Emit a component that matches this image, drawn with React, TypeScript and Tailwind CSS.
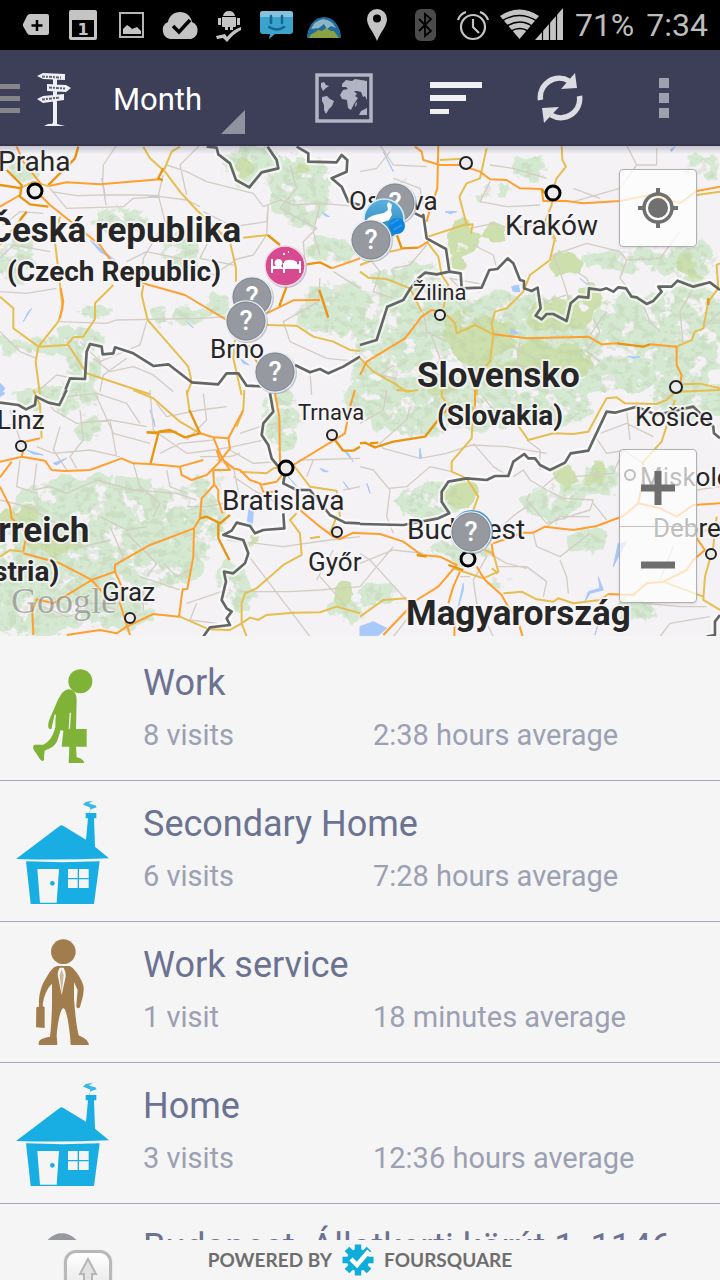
import type { ReactNode } from 'react';

type Tile = {
  x: number;
  y: number;
  minor: string;
  yellow: string;
  orange: string;
  dark: string;
  border: string;
  water: string;
};

// Each tile is drawn on a 1080x750 grid and scaled down by three
const TILES: Tile[] = [
  {
    x: 0,
    y: 145,
    minor:
      'M350 0L310 60L308 115L318 180M150 130L200 190L370 185L400 160L480 155L560 165L600 185M155 140L230 152L310 150L400 150L480 152M490 90L475 150L495 230L430 340L425 420M500 60L560 80L620 110L760 145L790 185L840 165L880 180L960 175L1080 185M560 150L540 60L600 0M610 200L700 245L800 230L805 180M805 185L800 270M870 60L890 130L840 190L950 250L910 290L915 350M640 260L600 340L700 360M380 350L440 320L560 345L640 390L700 350M180 530L320 535L350 525L600 520L680 515M0 440L80 445L170 430M0 340L40 300L150 320M10 240L60 200L130 205M0 560L60 620L110 640M240 590L300 650L420 600L440 530M280 640L330 680L400 665L460 690L520 740M300 740L310 690L380 640M800 270L760 330L700 345M960 180L940 260L960 330M960 400L955 470L850 530L870 590L980 640L1080 650M1000 380L1080 430M930 680L935 750M100 750L170 690L220 700',
    yellow:
      'M430 5L450 40L495 80L540 140L590 195L690 290L708 370L708 410M540 5L515 20L490 80M80 200L0 300M180 215L165 290L180 420L188 490L175 530L115 605L107 650L120 750M0 455L40 490L40 550L115 605L200 600L220 577L250 575L285 522L285 475L340 420M205 600L260 685L350 715L450 748M430 420L425 450L443 525L500 590L565 665L575 710L560 750M730 278L803 270M800 540L890 542L940 575L1000 590L1050 615L1080 618M705 585L700 640L725 750M60 130L100 110L150 125',
    orange:
      'M0 185L60 150M50 5L70 50L125 120M120 150L150 180L300 300L350 372L440 418L555 450L680 525M150 122L200 112L300 118L480 103M800 505L880 466L960 465M745 600L775 660M182 430L190 470L180 520M995 370L1080 340',
    dark: 'M20 75L65 120L60 155L90 178L145 185M0 120L65 130M145 120L225 40L235 5M490 70L475 100L488 106M860 425L838 483M920 358L960 352L995 370M958 435L985 518M803 270L840 300M60 225L80 200',
    border:
      'M620 5L650 8L655 28L690 55L708 105L748 127L785 82L835 70L830 45L803 5M890 5L925 25L925 50L1010 52L1025 30L1042 45L1040 80L995 100L1025 125L1045 170L1080 180M190 750L210 700L255 702L260 620L270 597L305 605L308 628L340 625L345 607L400 625L460 663L505 658L575 712L655 718L680 685L715 685L740 722L800 725M885 660L930 682L960 672L985 685L1030 665L1080 635',
    water:
      'M305 100L316 155L310 120ZM270 285L350 350L300 320ZM560 530L580 548L570 540ZM965 200L988 215L975 212ZM95 490L70 530L85 500ZM0 715L15 730L0 748ZM440 150L475 158L450 156ZM720 640L748 660L730 655Z',
  },
  {
    x: 360,
    y: 145,
    minor:
      'M60 0L100 60L200 65M0 80L50 70L90 20M100 100L180 130L190 180M390 60L460 70L560 100M390 110L360 170L440 185L540 180M640 130L720 160M560 260L590 290M330 250L400 235L450 250L560 235L600 240M340 300L400 330L410 370M580 330L600 380L630 470M580 330L680 295L780 320L800 345L900 340L960 260M800 345L780 400L800 425M650 380L680 400L700 440M700 520L720 560L680 620L720 650M740 500L690 570M900 560L870 530L850 480M800 0L830 60L780 130L640 170M890 10L890 60L830 60M20 330L60 380L40 440L100 460M200 300L150 360L100 370M210 560L240 640L210 700M190 500L200 560L260 590M480 420L560 470L620 450M480 590L470 660L560 680L560 640M1000 430L960 500L970 600M1080 500L1020 560M300 430L270 400L380 420M100 660L60 690L110 700',
    yellow:
      'M240 45L330 40M380 10L360 100L320 115L298 155L320 240L338 238L333 265M320 237L205 275M605 0L607 45L618 65L590 100L580 130L575 180L555 230L585 280L570 345L510 390L490 440L440 490L405 500L395 535L400 570L390 650L350 690L350 750M200 290L235 335L245 390L265 420L250 490M0 380L25 398L80 402L150 430L185 500M0 360L40 345M90 320L125 312M260 510L285 535L290 565L345 540L400 568M950 605L995 585L1005 560L1030 550L1045 470L1075 430L1070 360L1080 355M970 718L1020 716L1080 730M0 640L40 680L110 720L140 740L175 735M1010 150L1080 140',
    orange:
      'M235 0L232 130L205 210L200 230M330 70L360 80L390 103L440 105L480 130L545 132L550 168L620 168L670 175L780 168L870 150L960 175L1010 138L1080 125M175 308L205 290M0 690L20 650L135 580L185 515L215 495L240 500M400 568L500 580L685 575L725 598L770 595M870 598L950 605L950 660L965 690L960 720M165 5L185 20L190 45L240 60L300 60',
    dark: 'M100 240L125 310L175 308M770 595L850 605L870 598M1045 460L1045 480M545 132L560 150L600 150',
    border:
      'M165 205L185 215L190 210L200 280L258 312L268 380M0 600L50 585L82 485L130 465L150 432L175 400L195 383L230 388L268 380L302 385L305 430L365 428L388 375L412 372L443 340L460 355L480 405L492 408L492 430L515 438L533 428L542 490L527 512L545 523L560 507L580 507L620 528L632 475L655 455L685 458L687 430L722 435L740 430L760 440L775 427L798 430L815 455L830 457L860 477L880 468L905 440L895 425L935 425L953 407L1000 425L1050 412L1080 435',
    water:
      'M455 425L475 420L480 440L460 440ZM450 550L475 565L455 565ZM255 200L290 200L270 206ZM70 20L100 80L95 70ZM660 400L690 425L670 410ZM930 15L945 5L935 20ZM805 635L840 636L820 640Z',
  },
  {
    x: 0,
    y: 390,
    minor:
      'M120 0L160 60L230 100L330 90L440 110M200 20L290 10L380 40L420 100M30 60L60 150M180 110L160 180L200 240M240 60L250 150L210 200L230 235M330 90L350 200M290 20L340 130L450 160M110 170L160 190L270 180L360 200M110 220L100 300L150 290L200 310L290 270L400 300L530 310L590 330M400 220L420 290L480 340L460 380M60 210L50 290L110 310M500 240L510 290L560 310M470 40L500 80L600 60L680 50M450 0L460 120L560 190L640 180L700 170L790 150M610 10L620 90L560 150M480 190L540 160L640 150M720 130L780 110L830 100M690 180L760 220L840 215M650 210L700 230L720 330M600 200L690 200L720 190M560 350L620 350L670 340M700 260L760 300L850 350M680 450L850 470L990 450L1080 440M740 490L900 700L930 740M720 605L870 605L960 600L1080 590M960 560L1040 650M560 640L680 600M380 430L470 520L440 560M330 410L370 500L350 530M300 380L380 420L440 410M200 590L260 640L340 640M420 560L540 600M130 650L200 680L320 650L350 660M430 600L430 660M590 640L570 690L650 700M860 240L900 210L1080 205M940 210L920 260M1000 480L950 570M0 110L60 100M0 330L80 350L170 400M160 440L250 470L330 450M490 520L530 560L570 540M1030 300L1080 290',
    yellow:
      'M400 0L460 25L540 95L600 130M560 0L568 60M733 0L730 60L710 110M100 0L120 45L125 145M720 245L800 250L820 235L850 232M880 225L930 290L1010 302L1020 380M1010 380L990 430M890 370L870 390L900 430L905 495L850 525L770 595L735 610L725 640L725 700L740 740M620 718L690 720L725 700L750 683L775 690L800 675L880 668L960 667L1010 650L1080 670M540 680L620 715M0 500L30 480L70 485M930 445L960 440',
    orange:
      'M0 215L65 200L135 212L155 240L195 243L270 240L365 205L400 220L450 222L540 230L610 210M540 230L545 255L575 270L620 255L655 220L690 175L685 145L730 60M440 127L530 125M600 130L640 142L660 190L670 210L700 235L720 240L750 270L780 280L790 305L830 305M640 142L685 145M780 285L830 275L850 250M640 240L690 240L670 210M640 240L642 285L605 325L600 385L582 415L450 465L345 525L345 545L275 570L160 640L110 628L97 665L100 735M645 285L655 300L655 330L668 370M582 415L580 500L562 597L548 598L537 680L460 672L380 710L350 730L300 720L200 735M345 545L365 590L360 640L390 735M70 490L180 520L275 570L310 610M75 155L120 145M65 200L70 180M35 215L0 262M0 290L30 350L35 385L80 430L70 485M825 10L838 80L840 215M880 225L995 155L1035 130L1050 50L1065 0M900 360L960 410L1000 440L1020 447L1060 428L1080 430M650 180L660 210',
    dark: 'M440 127L475 130L452 220M475 125L510 120L555 142L600 130L568 60M600 385L620 380L660 400L690 375M655 400L655 445L688 510M1005 150L1030 182L1060 182L1080 170',
    border:
      'M0 38L55 45L78 58L105 45L108 20L145 38L178 45L200 0M810 10L820 65L790 100L785 135L805 165L815 205L835 230M855 250L850 280L890 300L930 300L990 375L1035 398L1080 400M850 370L853 415L790 420L765 430L750 408L710 398L695 422L670 435L730 450L745 490L735 520L700 550L672 545L678 575L665 630L680 655L695 665L680 685L690 705L630 712L610 740',
    water:
      'M750 345L760 360L757 410L742 405L745 370ZM860 255L890 290L930 300L900 300ZM1030 180L1060 215L1045 190ZM450 60L465 110L462 90ZM160 220L200 205L170 225ZM80 180L130 195L100 192ZM0 0L15 10L0 20ZM960 235L985 245L970 245ZM1030 275L1050 300L1040 290Z',
  },
  {
    x: 360,
    y: 390,
    minor:
      'M150 50L140 90L60 160L70 175L180 205L260 190L335 165L440 170L560 190M80 0L70 60L0 100M0 230L40 240L90 300L80 380L100 430M85 295L140 290L210 230L275 245M340 160L400 230L445 258M460 260L490 240L510 270L560 300L610 325L700 330L690 360L560 400L500 330L510 310M520 430L530 470L600 500L690 430M600 510L620 560L625 610M410 530L500 530L560 575L550 620M370 480L440 520L500 535M380 500L340 570L350 640L400 740M300 560L330 560M640 260L760 250L790 180L850 220M700 130L740 190L800 180M800 60L810 150M550 290L600 250M500 150L540 180L540 240M0 490L30 510L130 620L180 680M0 520L100 480L190 490M100 470L0 590M100 740L170 650M390 450L400 430L470 370L500 350M560 410L600 380L690 380M700 340L740 390M720 130L800 100L880 140M860 640L960 650L1040 650M900 740L930 700L1050 680M800 610L770 660M940 470L900 570M1080 290L1010 300M1080 400L1000 440M370 20L400 60L450 80',
    yellow:
      'M340 50L335 145L275 215L275 245L320 265L355 320L340 360M470 100L505 150L580 130L640 132L685 125L720 60L740 25L770 22L795 40L890 42L920 30L950 0M945 30L905 155L850 215M280 535L370 565L415 545L400 490L375 480M395 535L415 550M0 680L70 630L140 625M430 610L485 605L530 628L580 635L595 625L640 640L720 630L745 612M910 575L1030 620M1070 380L1060 470L1035 560L1030 630L1080 660M245 0L245 20L270 50M110 0L150 3M950 5L1080 0',
    orange:
      'M345 0L345 50M0 430L60 432L130 455L185 495L240 500L290 525L235 590L170 630L70 735M300 545L280 590L265 640M285 670L283 740M350 530L375 570L425 615L450 660L470 680L488 740M395 460L400 500M400 460L490 428L520 428L555 410L640 420L710 408L790 378L835 340L900 355L950 380L1000 345L1080 340M850 215L845 290L835 340M1000 430L1035 480L1000 510L980 540L910 575L860 580L820 615L745 612',
    dark: 'M0 160L15 158L45 172L100 155L195 140L250 70L270 50M30 160L55 158M265 525L310 540M170 495L200 500',
    border:
      'M0 402L130 405L235 385L268 370L245 335L245 305L265 275L320 265L380 270L405 258L445 258L460 215L493 192L505 205L525 205L540 225L570 240L615 218L632 190L685 182L740 65L765 68L830 50L890 75L1000 50L1060 110L1062 130L1080 145M1080 675L1065 695L1065 735L1040 740',
    water:
      'M0 710L40 695L80 715L50 740L0 740ZM180 175L185 205L178 205ZM775 460L800 455L775 500L760 530ZM715 560L730 600L690 610L675 635L685 605L720 595ZM720 680L705 735L715 700ZM310 580L290 670L310 600ZM20 280L30 310L25 290Z',
  },
];

// [cx, cy, rx, ry]
type Blob = [number, number, number, number];

const FOREST: Blob[] = [
  [300, 190, 34, 40], [250, 165, 30, 24], [330, 250, 30, 14], [335, 310, 40, 30], [15, 260, 22, 30],
  [180, 250, 22, 22], [175, 315, 26, 12], [70, 340, 40, 14], [25, 170, 20, 14], [120, 220, 30, 14],
  [215, 305, 14, 14], [95, 310, 22, 8], [80, 370, 20, 24], [20, 345, 26, 10], [60, 400, 50, 14],
  [90, 430, 16, 16], [100, 510, 90, 36], [170, 520, 60, 36], [60, 570, 70, 60], [160, 560, 50, 28],
  [30, 610, 60, 30], [110, 610, 50, 22], [240, 600, 16, 14], [280, 420, 22, 34], [350, 610, 22, 12],
  [410, 285, 44, 24], [440, 330, 80, 34], [390, 360, 40, 40], [500, 330, 80, 40], [560, 350, 90, 34],
  [620, 360, 100, 34], [690, 330, 40, 50], [470, 400, 90, 30], [420, 420, 50, 18], [540, 410, 60, 20],
  [640, 260, 60, 14], [690, 260, 30, 20], [700, 170, 20, 16], [530, 170, 20, 14], [640, 310, 46, 20],
  [690, 400, 40, 24], [560, 500, 24, 22], [530, 505, 14, 12], [590, 540, 24, 14], [600, 480, 22, 18],
  [430, 500, 36, 20], [500, 580, 14, 8], [640, 610, 26, 12], [380, 595, 24, 14], [460, 550, 34, 16],
  [490, 190, 24, 10], [405, 178, 10, 6], [230, 580, 16, 20], [210, 480, 18, 10], [370, 400, 30, 18],
];

const PARKS: Blob[] = [
  [462, 245, 16, 26], [500, 232, 20, 10], [566, 265, 16, 12], [692, 265, 12, 16], [250, 165, 12, 14],
  [480, 330, 40, 24], [560, 318, 34, 20], [490, 350, 40, 24], [550, 360, 50, 20], [460, 495, 18, 16],
  [600, 480, 16, 16], [565, 475, 14, 12], [345, 595, 10, 12], [590, 300, 14, 18], [20, 515, 24, 14],
  [250, 540, 14, 10], [55, 545, 30, 10], [440, 385, 16, 10], [300, 165, 12, 10],
];

type Label = { t: string; x: number; y: number; s: number; bold?: boolean };

const LABELS: Label[] = [
  { t: 'Praha', x: -2, y: 171, s: 28 },
  { t: 'Česká republika', x: -11, y: 242, s: 35, bold: true },
  { t: '(Czech Republic)', x: 7, y: 281, s: 28, bold: true },
  { t: 'Ostrava', x: 349, y: 210, s: 26 },
  { t: 'Kraków', x: 505, y: 235, s: 28 },
  { t: 'Žilina', x: 413, y: 300, s: 22 },
  { t: 'Brno', x: 210, y: 358, s: 26 },
  { t: 'Slovensko', x: 417, y: 387, s: 35, bold: true },
  { t: '(Slovakia)', x: 437, y: 425, s: 28, bold: true },
  { t: 'Košice', x: 635, y: 426, s: 26 },
  { t: 'Linz', x: -3, y: 429, s: 26 },
  { t: 'Trnava', x: 298, y: 420, s: 22 },
  { t: 'Bratislava', x: 222, y: 510, s: 28 },
  { t: 'Miskolc', x: 640, y: 486, s: 26 },
  { t: 'Debrecen', x: 653, y: 537, s: 26 },
  { t: 'Budapest', x: 407, y: 539, s: 28 },
  { t: 'Győr', x: 308, y: 571, s: 26 },
  { t: 'rreich', x: -2, y: 542, s: 35, bold: true },
  { t: 'stria)', x: -7, y: 581, s: 28, bold: true },
  { t: 'Graz', x: 102, y: 601, s: 26 },
  { t: 'Magyarország', x: 406, y: 625, s: 35, bold: true },
];

// [cx, cy, r, stroke]
const CITIES: [number, number, number, number][] = [
  [35, 191, 7, 3], [466, 163, 6, 2], [553, 193, 7, 3], [440, 315, 5, 2], [676, 387, 6, 2],
  [332, 435, 5, 2], [21, 446, 5, 2], [286, 468, 7, 3], [337, 532, 5, 2], [468, 559, 7, 3],
  [130, 618, 5, 2], [630, 475, 5, 2], [711, 554, 5, 2],
];

function Unknown({ x, y }: { x: number; y: number }) {
  return (
    <g>
      <circle cx={x + 1} cy={y + 1} r="21" fill="#8e93a8" opacity="0.5" />
      <circle cx={x} cy={y} r="20" fill="#9699a0" stroke="#e9edf3" strokeWidth="1.5" />
      <circle cx={x} cy={y} r="19" fill="none" stroke="#808894" strokeWidth="1" />
      <text x={x} y={y + 9} textAnchor="middle" fontSize="27" fontWeight="500" fill="#fff">
        ?
      </text>
    </g>
  );
}

function MapCanvas() {
  return (
    <svg
      viewBox="0 146 720 490"
      preserveAspectRatio="xMidYMid slice"
      className="block h-full w-full font-['Roboto',sans-serif]"
      role="img"
      aria-label="Map"
    >
      <defs>
        <filter id="terrain" x="0" y="146" width="720" height="490" filterUnits="userSpaceOnUse" colorInterpolationFilters="sRGB">
          <feGaussianBlur in="SourceGraphic" stdDeviation="5" result="soft" />
          <feTurbulence type="fractalNoise" baseFrequency="0.055" numOctaves="4" seed="7" />
          <feColorMatrix values="0 0 0 0 0.82  0 0 0 0 0.9  0 0 0 0 0.8  2.2 0 0 0 -0.6" result="noise" />
          <feComposite in="soft" in2="noise" operator="arithmetic" k2="1" k3="1" k4="-1.1" />
          <feColorMatrix values="0 0 0 0 0.835  0 0 0 0 0.91  0 0 0 0 0.825  0 0 0 7 -0.5" />
        </filter>
        <filter id="park" x="0" y="146" width="720" height="490" filterUnits="userSpaceOnUse" colorInterpolationFilters="sRGB">
          <feGaussianBlur in="SourceGraphic" stdDeviation="4" result="soft" />
          <feTurbulence type="fractalNoise" baseFrequency="0.04" numOctaves="4" seed="12" />
          <feColorMatrix values="0 0 0 0 1  0 0 0 0 1  0 0 0 0 1  2.2 0 0 0 -0.6" result="noise" />
          <feComposite in="soft" in2="noise" operator="arithmetic" k2="1" k3="1" k4="-1" />
          <feColorMatrix values="0 0 0 0 0.8  0 0 0 0 0.875  0 0 0 0 0.68  0 0 0 9 -0.9" />
        </filter>
        <filter id="shade" x="0" y="146" width="720" height="490" filterUnits="userSpaceOnUse" colorInterpolationFilters="sRGB">
          <feGaussianBlur in="SourceGraphic" stdDeviation="5" result="soft" />
          <feTurbulence type="fractalNoise" baseFrequency="0.12 0.16" numOctaves="3" seed="3" />
          <feColorMatrix values="0 0 0 0 0  0 0 0 0 0  0 0 0 0 0  2.6 0 0 0 -1" result="noise" />
          <feComposite in="soft" in2="noise" operator="arithmetic" k2="1" k3="1" k4="-1.2" />
          <feColorMatrix values="0 0 0 0 0.72  0 0 0 0 0.8  0 0 0 0 0.66  0 0 0 3 -0.2" />
        </filter>
        <linearGradient id="mapTop" x1="0" y1="0" x2="0" y2="1">
          <stop offset="0" stopColor="#3d3e57" stopOpacity="0.25" />
          <stop offset="1" stopColor="#3d3e57" stopOpacity="0" />
        </linearGradient>
        <linearGradient id="blue" x1="0" y1="0" x2="0" y2="1">
          <stop offset="0" stopColor="#5fb0dd" />
          <stop offset="1" stopColor="#1d83bd" />
        </linearGradient>
      </defs>
      <rect y="146" width="720" height="490" fill="#f5f2f6" />
      <g filter="url(#terrain)">
        {FOREST.map(([cx, cy, rx, ry], i) => (
          <ellipse key={i} cx={cx} cy={cy} rx={rx} ry={ry} />
        ))}
      </g>
      <g filter="url(#park)">
        {PARKS.map(([cx, cy, rx, ry], i) => (
          <ellipse key={i} cx={cx} cy={cy} rx={rx} ry={ry} />
        ))}
      </g>
      <g filter="url(#shade)" opacity="0.3">
        {FOREST.map(([cx, cy, rx, ry], i) => (
          <ellipse key={i} cx={cx} cy={cy} rx={rx} ry={ry} />
        ))}
      </g>
      {TILES.map((tile) => (
        <g
          key={`${tile.x}-${tile.y}`}
          transform={`translate(${tile.x} ${tile.y}) scale(0.3333)`}
          fill="none"
          strokeLinejoin="round"
        >
          <path d={tile.water} fill="#a9c9fa" stroke="#a9c9fa" strokeWidth="3" />
          <path d={tile.minor} stroke="#d3cdc4" strokeWidth="4" />
          <path d={tile.border} stroke="#ffffff" strokeOpacity="0.6" strokeWidth="22" />
          <path d={tile.yellow} stroke="#e6be4f" strokeWidth="6" />
          <path d={tile.orange} stroke="#ff9f2e" strokeWidth="6" />
          <path d={tile.dark} stroke="#e8940f" strokeWidth="7" />
          <path d={tile.border} stroke="#646665" strokeWidth="8" />
        </g>
      ))}
      <text
        x="11"
        y="613"
        fontSize="36"
        fill="#7c7c7c"
        fillOpacity="0.6"
        stroke="#fff"
        strokeOpacity="0.4"
        strokeWidth="2"
        paintOrder="stroke"
        className="font-['Liberation_Serif',serif]"
      >
        Google
      </text>
      {CITIES.map(([cx, cy, r, w]) => (
        <circle key={`${cx}-${cy}`} cx={cx} cy={cy} r={r} fill="#ececec" stroke={w > 2 ? '#000' : '#222'} strokeWidth={w} />
      ))}
      {LABELS.map((l) => (
        <text
          key={l.t}
          x={l.x}
          y={l.y}
          fontSize={l.s}
          fontWeight={l.bold ? 700 : 400}
          fill="#262626"
          stroke="#f8f6f9"
          strokeOpacity="0.8"
          strokeWidth="4"
          strokeLinejoin="round"
          paintOrder="stroke"
        >
          {l.t}
        </text>
      ))}
      <Unknown x={395} y={203} />
      <circle cx="384" cy="219" r="20" fill="url(#blue)" stroke="#d6ecf8" strokeWidth="1.5" />
      <path d="M367 219q5-4 12-5l5-1 4-3-1-6 2-2 3 3-1 5 1 5-3 5-8 3-4 3-3-3-4 0z" fill="#fff" />
      <circle cx="397" cy="226" r="8" fill="#0d83dd" />
      <path d="M391 224l8-5M393 230l9-5" stroke="#2e9af0" strokeWidth="2" />
      <Unknown x={371} y={240} />
      <circle cx="286" cy="267" r="21" fill="#8e93a8" opacity="0.5" />
      <circle cx="285" cy="266" r="20" fill="#d84a90" stroke="#f5d7e6" strokeWidth="1.5" />
      <path
        d="M271 259h2v7h3a4 4 0 1 1 5 0l2 2v-5h12v2l4-1v-3h2v12h-2v-4h-14v4h-2v-4h-10v4h-2z"
        fill="#fff"
      />
      <path d="M284 262c2-3 9-3 13 0v4h-13zM283 253h2v2h-2zM288 251h1v2h-1z" fill="#fff" />
      <Unknown x={252} y={297} />
      <Unknown x={246} y={321} />
      <Unknown x={275} y={372} />
      <circle cx="472" cy="531" r="21" fill="#4f9ccb" />
      <Unknown x={471} y={532} />
      <rect y="146" width="720" height="8" fill="url(#mapTop)" />
    </svg>
  );
}

function StatusCell({ children }: { children: ReactNode }) {
  return (
    <svg viewBox="0 0 48 50" className="h-[50px] w-12 shrink-0" fill="#c4c4c4">
      {children}
    </svg>
  );
}

function StatusBar() {
  return (
    <div className="flex h-[50px] shrink-0 items-center bg-black px-3 text-[32px] text-[#bdbdbd]">
      <StatusCell>
        <path d="M18 14h17q2 0 2 2v17q0 2-2 2H18q-2 0-3-2l-4-7v-2l4-8q1-2 3-2z" />
        <path d="M25 20v11M19.500 25.500h11" stroke="#000" strokeWidth="2.500" />
      </StatusCell>
      <StatusCell>
        <path fillRule="evenodd" d="M11 10h24q2 0 2 2v26q0 2-2 2H11q-2 0-2-2V12q0-2 2-2zM12 20v17h22V20z" />
        <text x="23" y="35" textAnchor="middle" fontSize="16" fontWeight="700" className="font-['DejaVu_Sans',sans-serif]">
          1
        </text>
      </StatusCell>
      <StatusCell>
        <rect x="12" y="13" width="23" height="24" fill="none" stroke="#b5b5b5" strokeWidth="2" />
        <path d="M15 34v-5l4-4 3 2 2 2 5-2 4 4v3z" />
      </StatusCell>
      <StatusCell>
        <path d="M14 39a9 9 0 0 1-2-17c1-6 6-10 12-10s11 4 12 10a9 9 0 0 1-1 17z" />
        <path d="M17 26l6 6 11-12" fill="none" stroke="#000" strokeWidth="3.500" />
      </StatusCell>
      <StatusCell>
        <path d="M19 16q1-5 6-5t6 5zM18 17h14v9q0 1-1 1h-2v3h-3v-3h-2v3h-3v-3h-2q-1 0-1-1zM14 18h3v7h-3zM33 18h3v7h-3zM20 9l2 3M30 9l-2 3" />
        <path d="M12 36l9-2 2 3c5-6 9-8 14-10v3c-6 3-10 7-14 12l-4-4-6 1z" />
      </StatusCell>
      <StatusCell>
        <path d="M11 11h27q3 0 3 3v17q0 3-3 3H23l-6 5 1-5h-7q-3 0-3-3V14q0-3 3-3z" fill="#3ba3cc" />
        <path d="M8 17v-3q0-3 3-3h27q3 0 3 3v3z" fill="#83c1dc" />
        <path d="M19 16v7M30 16v7M17 27q8 5 15 0" fill="none" stroke="#17668f" strokeWidth="2.500" strokeLinecap="round" />
      </StatusCell>
      <StatusCell>
        <path d="M7 38a17 21 0 0 1 34 0z" fill="#1f6c9f" />
        <path d="M11 29q3-8 12-10 9 1 13 9l-5-2-4 3-3-5-5 4z" fill="#8db6c4" />
        <path d="M9 38q1-4 5-5l4-3 4 1 4-3 5 3h3l5 7z" fill="#8ca13f" />
      </StatusCell>
      <div className="ml-auto flex items-center">
        <StatusCell>
          <path fillRule="evenodd" d="M24 9a10 10 0 0 1 10 10c0 7-6 12-10 22-4-10-10-15-10-22A10 10 0 0 1 24 9zm0 5.500a4 4 0 1 0 0 8 4 4 0 0 0 0-8z" />
        </StatusCell>
        <StatusCell>
          <rect x="14" y="9" width="21" height="32" rx="6" fill="#4b4b4b" />
          <path d="M18 19l12 12-6 5V14l6 5-12 12" fill="none" stroke="#000" strokeWidth="1.800" />
        </StatusCell>
        <StatusCell>
          <circle cx="24" cy="27" r="12" fill="none" stroke="#c4c4c4" strokeWidth="2.200" />
          <path d="M24 19v8l6 6M9 20q2-6 8-8M39 20q-2-6-8-8" fill="none" stroke="#c4c4c4" strokeWidth="2.200" />
        </StatusCell>
        <svg viewBox="0 0 68 50" className="h-[50px] w-[68px]" fill="#c4c4c4">
          <path d="M3 16q20-13 39 0L22.500 39z" />
          <path d="M5 21q17-11 35 0M10 26q13-8 25 0M14 31q9-5 17 0" fill="none" stroke="#000" strokeWidth="1.500" />
          <path d="M38 40L66 8v32z" />
          <path d="M45.500 28v13M52.500 20v21M59.500 12v29" stroke="#000" strokeWidth="1.200" />
        </svg>
        <span className="ml-2.5">71%</span>
        <span className="ml-3">7:34</span>
      </div>
    </div>
  );
}

function ActionBar() {
  return (
    <header className="flex h-24 shrink-0 items-center bg-[#3d3e57] shadow-[inset_0_-2px_0_#35364d]">
      <button type="button" aria-label="Open menu" className="flex items-center">
        <svg viewBox="0 0 20 30" className="h-[30px] w-5" fill="#85858a">
          <path d="M0 1h20v5H0zM0 13h20v5H0zM0 25h20v5H0z" />
        </svg>
        <svg viewBox="20 60 70 75" className="h-[75px] w-[70px]">
          <g fill="#f0f0f4">
            <path d="M53 75h4v49h-4zM44 125q5-3 8-2l2-4 3 4 8 2zM43 72l22 1v6l-22-1-6-3zM47 83l19 1 5 3-5 4-19-1zM43 95l21-2v6l-21 3-6-4z" />
          </g>
          <path d="M42 75.500l19 1M49 86.500l16 1M42 98.500l18-2" stroke="#62637a" strokeWidth="2" strokeDasharray="3 1 2 1" />
        </svg>
      </button>
      <div className="relative ml-3 h-20">
        <select
          aria-label="Period"
          className="h-20 w-[143px] appearance-none bg-transparent pt-1 pl-[11px] text-[31px] text-white outline-none"
          defaultValue="month"
        >
          <option value="month">Month</option>
        </select>
        <svg viewBox="0 0 24 24" className="pointer-events-none absolute right-0 bottom-1 h-6 w-6" fill="#9092a0">
          <path d="M24 0v24H0z" />
        </svg>
      </div>
      <div className="ml-auto flex pr-1">
        <button type="button" aria-label="Map" className="flex h-20 w-[120px] items-center justify-center">
          <svg viewBox="315 73 58 50" className="h-[50px] w-[58px]">
            <rect x="317" y="75" width="54" height="46" fill="none" stroke="#b1b4c2" strokeWidth="3.500" />
            <g fill="#b1b4c2">
              <path d="M321 83l3-1 2 3 3 1-3 2-2 2-1 1-1-2-1-2zM322 97l5-1 3 3 4 2-2 5-3 3-3 5-2-4v-5l-2-4zM342 84l4-4 6 1 3-2 12 2v19l-2-4-2 1-2-5-4-1-3 0 3 3-2 2 3 2-4 6-3 6-3-2-1-8-5-1-2-4 3-5 5-1-2-2h-4zM356 102l1 1-1 4-1-1zM359 115l2-4 6-3v7z" />
            </g>
          </svg>
        </button>
        <button type="button" aria-label="Sort" className="flex h-20 w-[104px] items-center justify-center">
          <svg viewBox="0 0 52 33" className="h-[33px] w-[52px]" fill="#f0f0f3">
            <path d="M0 0h52v6H0zM0 13h36v6H0zM0 27h19v5H0z" />
          </svg>
        </button>
        <button type="button" aria-label="Refresh" className="flex h-20 w-[104px] items-center justify-center">
          <svg viewBox="0 0 46 50" className="h-[50px] w-[46px]">
            <path d="M3.500 27A19 19 0 0 1 32 8M42.500 23A19 19 0 0 1 14 42" fill="none" stroke="#dcdce2" strokeWidth="5.500" />
            <path d="M38 0l2 15-16 1zM7 50L5 35l17-1z" fill="#dcdce2" />
          </svg>
        </button>
        <button type="button" aria-label="More options" className="flex h-20 w-[104px] items-center justify-center">
          <svg viewBox="0 0 10 40" className="h-10 w-[10px]" fill="#9fa0ae">
            <path d="M0 0h10v10H0zM0 15h10v10H0zM0 30h10v10H0z" />
          </svg>
        </button>
      </div>
    </header>
  );
}

const HouseIcon = () => (
  <g fill="#18aee3">
    <path d="M48 234L180 134q4-3 9 0l69 42 6-64h-7V96h32v16h-7l3 85 42 35q-140 6-279 2z" />
    <path d="M78 241q110 5 221 0l-17 128H92z" />
    <path d="M112 264h65l-7 101h-50zM204 264h62v57h-62z" fill="#f5f5f5" />
    <circle cx="157" cy="307" r="7" />
    <path d="M204 293h62M235 264v57" stroke="#18aee3" strokeWidth="4" />
    <path d="M267 96q3-12 10-13l13-4-4-6-16-4-4 8 5 4-2 14zM249 71l20 8 6-8-8-4 12-8-22 4z" opacity="0.85" />
  </g>
);

const WalkerIcon = () => (
  <g fill="#7eb338">
    <circle cx="241" cy="124" r="36" />
    <path d="M205 148C185 150 175 178 165 200 155 225 142 245 145 262 148 270 155 270 156 262L167 222 166 262C160 285 150 305 130 314L104 314C97 318 99 328 106 336L120 358C128 368 134 362 132 352L134 332C150 325 165 318 172 302L182 270 190 272 185 320 208 320 206 369 253 369C250 358 240 354 230 352L228 320 260 320 260 267 228 267 230 180C230 160 220 148 205 148Z" />
    <path d="M211 218L208 266M166 224L157 264" stroke="#f5f5f5" strokeWidth="4" />
  </g>
);

const SuitIcon = () => (
  <g fill="#a17d4d">
    <circle cx="190" cy="89" r="37" />
    <path d="M172 132L208 132C225 137 248 178 250 190 254 215 245 235 240 255 236 262 228 258 229 250L233 205 222 180 222 230C225 270 228 305 236 340 250 348 264 352 267 369L212 369 210 340C205 300 200 262 190 258 180 262 172 310 170 340L172 369 117 369C112 355 125 348 150 344 155 300 156 260 156 240L156 185C140 200 130 225 128 252L134 256 134 318 108 316 109 256 117 254C115 225 122 190 140 165 152 145 160 134 172 132Z" />
    <path d="M179 137h12q9 18 5 32l-11 50-10-50q-5-15 4-32z" fill="#f5f5f5" />
    <path d="M185 142l6 18-6 52-6-52z" fill="#c9b89c" />
  </g>
);

const PlaceIcon = () => <circle cx="186" cy="144" r="56" fill="#9699a0" />;

type Place = { name: string; visits: string; average: string; icon: () => ReactNode };

const PLACES: Place[] = [
  { name: 'Work', visits: '8 visits', average: '2:38 hours average', icon: WalkerIcon },
  { name: 'Secondary Home', visits: '6 visits', average: '7:28 hours average', icon: HouseIcon },
  { name: 'Work service', visits: '1 visit', average: '18 minutes average', icon: SuitIcon },
  { name: 'Home', visits: '3 visits', average: '12:36 hours average', icon: HouseIcon },
  { name: 'Budapest, Állatkerti körút 1, 1146', visits: '', average: '', icon: PlaceIcon },
];

function PlaceRow({ place }: { place: Place }) {
  const Icon = place.icon;
  return (
    <li className="flex h-[141px] border-b border-[#a3a5b8]">
      <svg viewBox="0 0 429 420" className="h-[140px] w-[143px] shrink-0">
        <Icon />
      </svg>
      <div className="min-w-0 flex-1 pt-[21px]">
        <h2 className="truncate text-[36px] leading-[44px] text-[#6c7291]">{place.name}</h2>
        <div className="mt-3 flex text-[29px] leading-9 text-[#9ca0b3]">
          <span className="w-[230px]">{place.visits}</span>
          <span>{place.average}</span>
        </div>
      </div>
    </li>
  );
}

function Footer() {
  return (
    <footer className="relative flex h-10 shrink-0 items-center justify-center gap-2.5 bg-[#f5f5f5] font-['Lato',sans-serif] text-[19px] font-bold text-[#6e6e6e]">
      <button
        type="button"
        aria-label="Expand"
        className="absolute top-[10px] left-16 flex h-12 w-12 justify-center rounded-xl border-[3px] border-[#b9b9b9] bg-gradient-to-b from-white to-[#e4e4e4] pt-1 shadow"
      >
        <svg viewBox="0 0 20 30" className="h-[30px] w-5" fill="#e2e2e2" stroke="#b5b5b5" strokeWidth="2">
          <path d="M10 2l8 15h-4v14H6V17H2z" />
        </svg>
      </button>
      <span>POWERED BY</span>
      <svg viewBox="0 0 32 32" className="h-8 w-8">
        <circle cx="16" cy="16" r="11" fill="#0fadd9" />
        <path d="M16 0.500v31M0.500 16h31M5 5l22 22M27 5L5 27" stroke="#0fadd9" strokeWidth="6.500" />
        <path d="M9 15l6 6L27 7" fill="none" stroke="#fff" strokeWidth="4.500" />
      </svg>
      <span>FOURSQUARE</span>
    </footer>
  );
}

export default function App() {
  return (
    <div className="flex h-screen flex-col overflow-hidden bg-[#f5f5f5] font-['Roboto',sans-serif]">
      <StatusBar />
      <ActionBar />
      <section className="relative min-h-0 flex-[490]">
        <MapCanvas />
        <button
          type="button"
          aria-label="My location"
          className="absolute top-[23px] right-[23px] flex h-[78px] w-[78px] items-center justify-center rounded-sm border border-[#b0b0b0] bg-white/75 shadow-sm"
        >
          <svg viewBox="0 0 40 40" className="h-10 w-10">
            <circle cx="20" cy="20" r="14" fill="none" stroke="#707070" strokeWidth="3.500" />
            <circle cx="20" cy="20" r="10" fill="#707070" />
            <path d="M20 0v6M20 34v6M0 20h6M34 20h6" stroke="#707070" strokeWidth="4" />
          </svg>
        </button>
        <div className="absolute right-[23px] bottom-[33px] flex w-[78px] flex-col rounded-sm border border-[#b0b0b0] bg-white/70 shadow-sm">
          <button type="button" aria-label="Zoom in" className="flex h-[77px] items-center justify-center border-b border-[#c4c4c4]">
            <svg viewBox="0 0 34 34" className="h-[34px] w-[34px]">
              <path d="M17 0v34M0 17h34" stroke="#6e6e6e" strokeWidth="7" />
            </svg>
          </button>
          <button type="button" aria-label="Zoom out" className="flex h-[75px] items-center justify-center">
            <svg viewBox="0 0 34 34" className="h-[34px] w-[34px]">
              <path d="M0 17h34" stroke="#6e6e6e" strokeWidth="7" />
            </svg>
          </button>
        </div>
      </section>
      <main className="min-h-0 flex-[604] overflow-hidden">
        <ul className="pt-1">
          {PLACES.map((place) => (
            <PlaceRow key={place.name} place={place} />
          ))}
        </ul>
      </main>
      <Footer />
    </div>
  );
}
